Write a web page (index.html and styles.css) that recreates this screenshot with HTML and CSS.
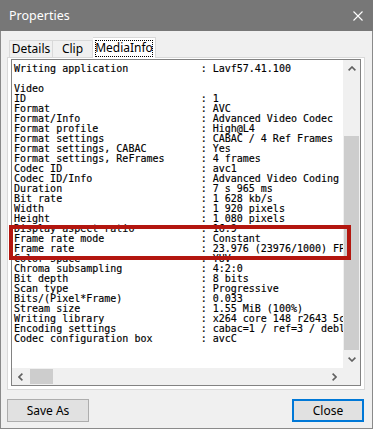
FILE: index.html
```html
<!DOCTYPE html>
<html lang="en">
<head>
  <meta charset="UTF-8">
  <title>Properties</title>
  <link rel="stylesheet" href="styles.css">
</head>
<body>

  <div class="window">
    <div class="titlebar">
      <span class="title">Properties</span>
      <svg class="close-x" width="10" height="10" viewBox="0 0 10 10">
        <path d="M0.5 0.5 L9.5 9.5 M9.5 0.5 L0.5 9.5" stroke="#fff" stroke-width="1.1" fill="none"/>
      </svg>
    </div>

    <div class="body">
      <div class="tabs">
        <div class="tab tab-details">Details</div>
        <div class="tab tab-clip">Clip</div>
        <div class="tab tab-active"><span class="focus">MediaInfo</span></div>
      </div>

      <div class="page">
        <div class="listbox">
          <div class="info">
            <div class="row"><span class="key">Writing application</span><span>: Lavf57.41.100</span></div>
            <div class="row"></div>
            <div class="row"><span class="key">Video</span></div>
            <div class="row"><span class="key">ID</span><span>: 1</span></div>
            <div class="row"><span class="key">Format</span><span>: AVC</span></div>
            <div class="row"><span class="key">Format/Info</span><span>: Advanced Video Codec</span></div>
            <div class="row"><span class="key">Format profile</span><span>: High@L4</span></div>
            <div class="row"><span class="key">Format settings</span><span>: CABAC / 4 Ref Frames</span></div>
            <div class="row"><span class="key">Format settings, CABAC</span><span>: Yes</span></div>
            <div class="row"><span class="key">Format settings, ReFrames</span><span>: 4 frames</span></div>
            <div class="row"><span class="key">Codec ID</span><span>: avc1</span></div>
            <div class="row"><span class="key">Codec ID/Info</span><span>: Advanced Video Coding</span></div>
            <div class="row"><span class="key">Duration</span><span>: 7 s 965 ms</span></div>
            <div class="row"><span class="key">Bit rate</span><span>: 1 628 kb/s</span></div>
            <div class="row"><span class="key">Width</span><span>: 1 920 pixels</span></div>
            <div class="row"><span class="key">Height</span><span>: 1 080 pixels</span></div>
            <div class="row"><span class="key">Display aspect ratio</span><span>: 16:9</span></div>
            <div class="row"><span class="key">Frame rate mode</span><span>: Constant</span></div>
            <div class="row"><span class="key">Frame rate</span><span>: 23.976 (23976/1000) FPS</span></div>
            <div class="row"><span class="key">Color space</span><span>: YUV</span></div>
            <div class="row"><span class="key">Chroma subsampling</span><span>: 4:2:0</span></div>
            <div class="row"><span class="key">Bit depth</span><span>: 8 bits</span></div>
            <div class="row"><span class="key">Scan type</span><span>: Progressive</span></div>
            <div class="row"><span class="key">Bits/(Pixel*Frame)</span><span>: 0.033</span></div>
            <div class="row"><span class="key">Stream size</span><span>: 1.55 MiB (100%)</span></div>
            <div class="row"><span class="key">Writing library</span><span>: x264 core 148 r2643 5c65704</span></div>
            <div class="row"><span class="key">Encoding settings</span><span>: cabac=1 / ref=3 / deblock=1:0:0 / analyse=0x3:0x113</span></div>
            <div class="row"><span class="key">Codec configuration box</span><span>: avcC</span></div>
          </div>

          <div class="vscroll">
            <div class="arrow">
              <svg width="8" height="5" viewBox="0 0 8 5"><path d="M0.6 4.4 L4 1 L7.4 4.4" stroke="#606060" stroke-width="1.6" fill="none"/></svg>
            </div>
            <div class="track"><div class="vthumb"></div></div>
            <div class="arrow">
              <svg width="8" height="5" viewBox="0 0 8 5"><path d="M0.6 0.6 L4 4 L7.4 0.6" stroke="#606060" stroke-width="1.6" fill="none"/></svg>
            </div>
          </div>

          <div class="hscroll">
            <div class="arrow">
              <svg width="5" height="8" viewBox="0 0 5 8"><path d="M4.4 0.6 L1 4 L4.4 7.4" stroke="#606060" stroke-width="1.6" fill="none"/></svg>
            </div>
            <div class="track"><div class="hthumb"></div></div>
            <div class="arrow">
              <svg width="5" height="8" viewBox="0 0 5 8"><path d="M0.6 0.6 L4 4 L0.6 7.4" stroke="#606060" stroke-width="1.6" fill="none"/></svg>
            </div>
          </div>

          <div class="corner"></div>
        </div>
      </div>

      <div class="buttons">
        <button type="button" class="btn btn-save">Save As</button>
        <button type="button" class="btn btn-close">Close</button>
      </div>
    </div>

    <!-- marked area over the frame rate lines -->
    <div class="highlight"></div>
  </div>

</body>
</html>
```

FILE: styles.css
```css
* {
  margin: 0;
  padding: 0;
  box-sizing: border-box;
}

body {
  background-color: #f0f0f0;
  font-family: "Segoe UI", "Noto Sans", "Liberation Sans", sans-serif;
  width: 373px;
  height: 429px;
  overflow: hidden;
}

.window {
  position: relative;
  width: 373px;
  height: 429px;
  display: flex;
  flex-direction: column;
  background-color: #f0f0f0;
}

.titlebar {
  height: 31px;
  background-color: #777777;
  color: white;
  display: flex;
  align-items: center;
  justify-content: space-between;
  padding: 0 10px 0 9px;
  font-size: 12.5px;
}

.close-x {
  display: block;
}

.body {
  flex: 1;
  border: 1px solid #8a8a8a;
  border-top: none;
  padding: 6px 0 0 6px;
}

.tabs {
  display: flex;
  align-items: flex-end;
  height: 20px;
  padding-left: 2px;
  font-size: 12px;
  color: #000;
}

.tab {
  height: 17px;
  line-height: 16px;
  text-align: center;
  border: 1px solid #d9d9d9;
  border-bottom: none;
  background-color: #f0f0f0;
}

.tab-details {
  width: 44px;
}

.tab-clip {
  width: 40px;
  border-left: none;
}

.tab-active {
  position: relative;
  z-index: 1;
  width: 63px;
  height: 21px;
  margin-bottom: -1px;
  padding-top: 2px;
  border-left: none;
  background-color: #fff;
}

.focus {
  display: inline-block;
  width: 58px;
  height: 17px;
  line-height: 15px;
  outline: 1px dotted #000;
  outline-offset: -1px;
}

.page {
  width: 358px;
  height: 333px;
  border: 1px solid #d9d9d9;
  background-color: #fff;
  padding: 1px 3px 3px 3px;
}

.listbox {
  width: 350px;
  height: 327px;
  border: 1px solid #828282;
  display: grid;
  grid-template-columns: 1fr 17px;
  grid-template-rows: 1fr 17px;
  background-color: #fff;
}

.info {
  overflow: hidden;
  padding: 4px 0 0 2px;
  font-family: "DejaVu Sans Mono", "Liberation Mono", monospace;
  font-size: 10px;
  line-height: 10px;
  color: #000;
  -webkit-text-stroke: 0.15px #000;
}

.row {
  height: 10px;
  white-space: pre;
}

.key {
  display: inline-block;
  width: 31ch;
}

.vscroll {
  display: flex;
  flex-direction: column;
  background-color: #f0f0f0;
}

.hscroll {
  display: flex;
  background-color: #f0f0f0;
}

.corner {
  background-color: #f0f0f0;
}

.arrow {
  width: 17px;
  height: 17px;
  display: flex;
  align-items: center;
  justify-content: center;
  flex-shrink: 0;
}

.arrow svg {
  display: block;
}

.track {
  flex: 1;
}

.vthumb {
  width: 15px;
  height: 214px;
  margin: 59px 1px 0 1px;
  background-color: #cdcdcd;
}

.hthumb {
  width: 23px;
  height: 15px;
  margin: 1px 0 0 1px;
  background-color: #cdcdcd;
}

.buttons {
  display: flex;
  justify-content: space-between;
  width: 358px;
  margin-top: 9px;
  padding-right: 1px;
}

.btn {
  height: 23px;
  font-family: "Segoe UI", "Noto Sans", "Liberation Sans", sans-serif;
  font-size: 12px;
  color: #000;
  background-color: #e1e1e1;
  border: 1px solid #adadad;
}

.btn-save {
  width: 82px;
}

.btn-close {
  width: 72px;
  border: 2px solid #0078d7;
}

.highlight {
  position: absolute;
  left: 9px;
  top: 225px;
  width: 342px;
  height: 35px;
  border: 4px solid #b3160f;
}
```
